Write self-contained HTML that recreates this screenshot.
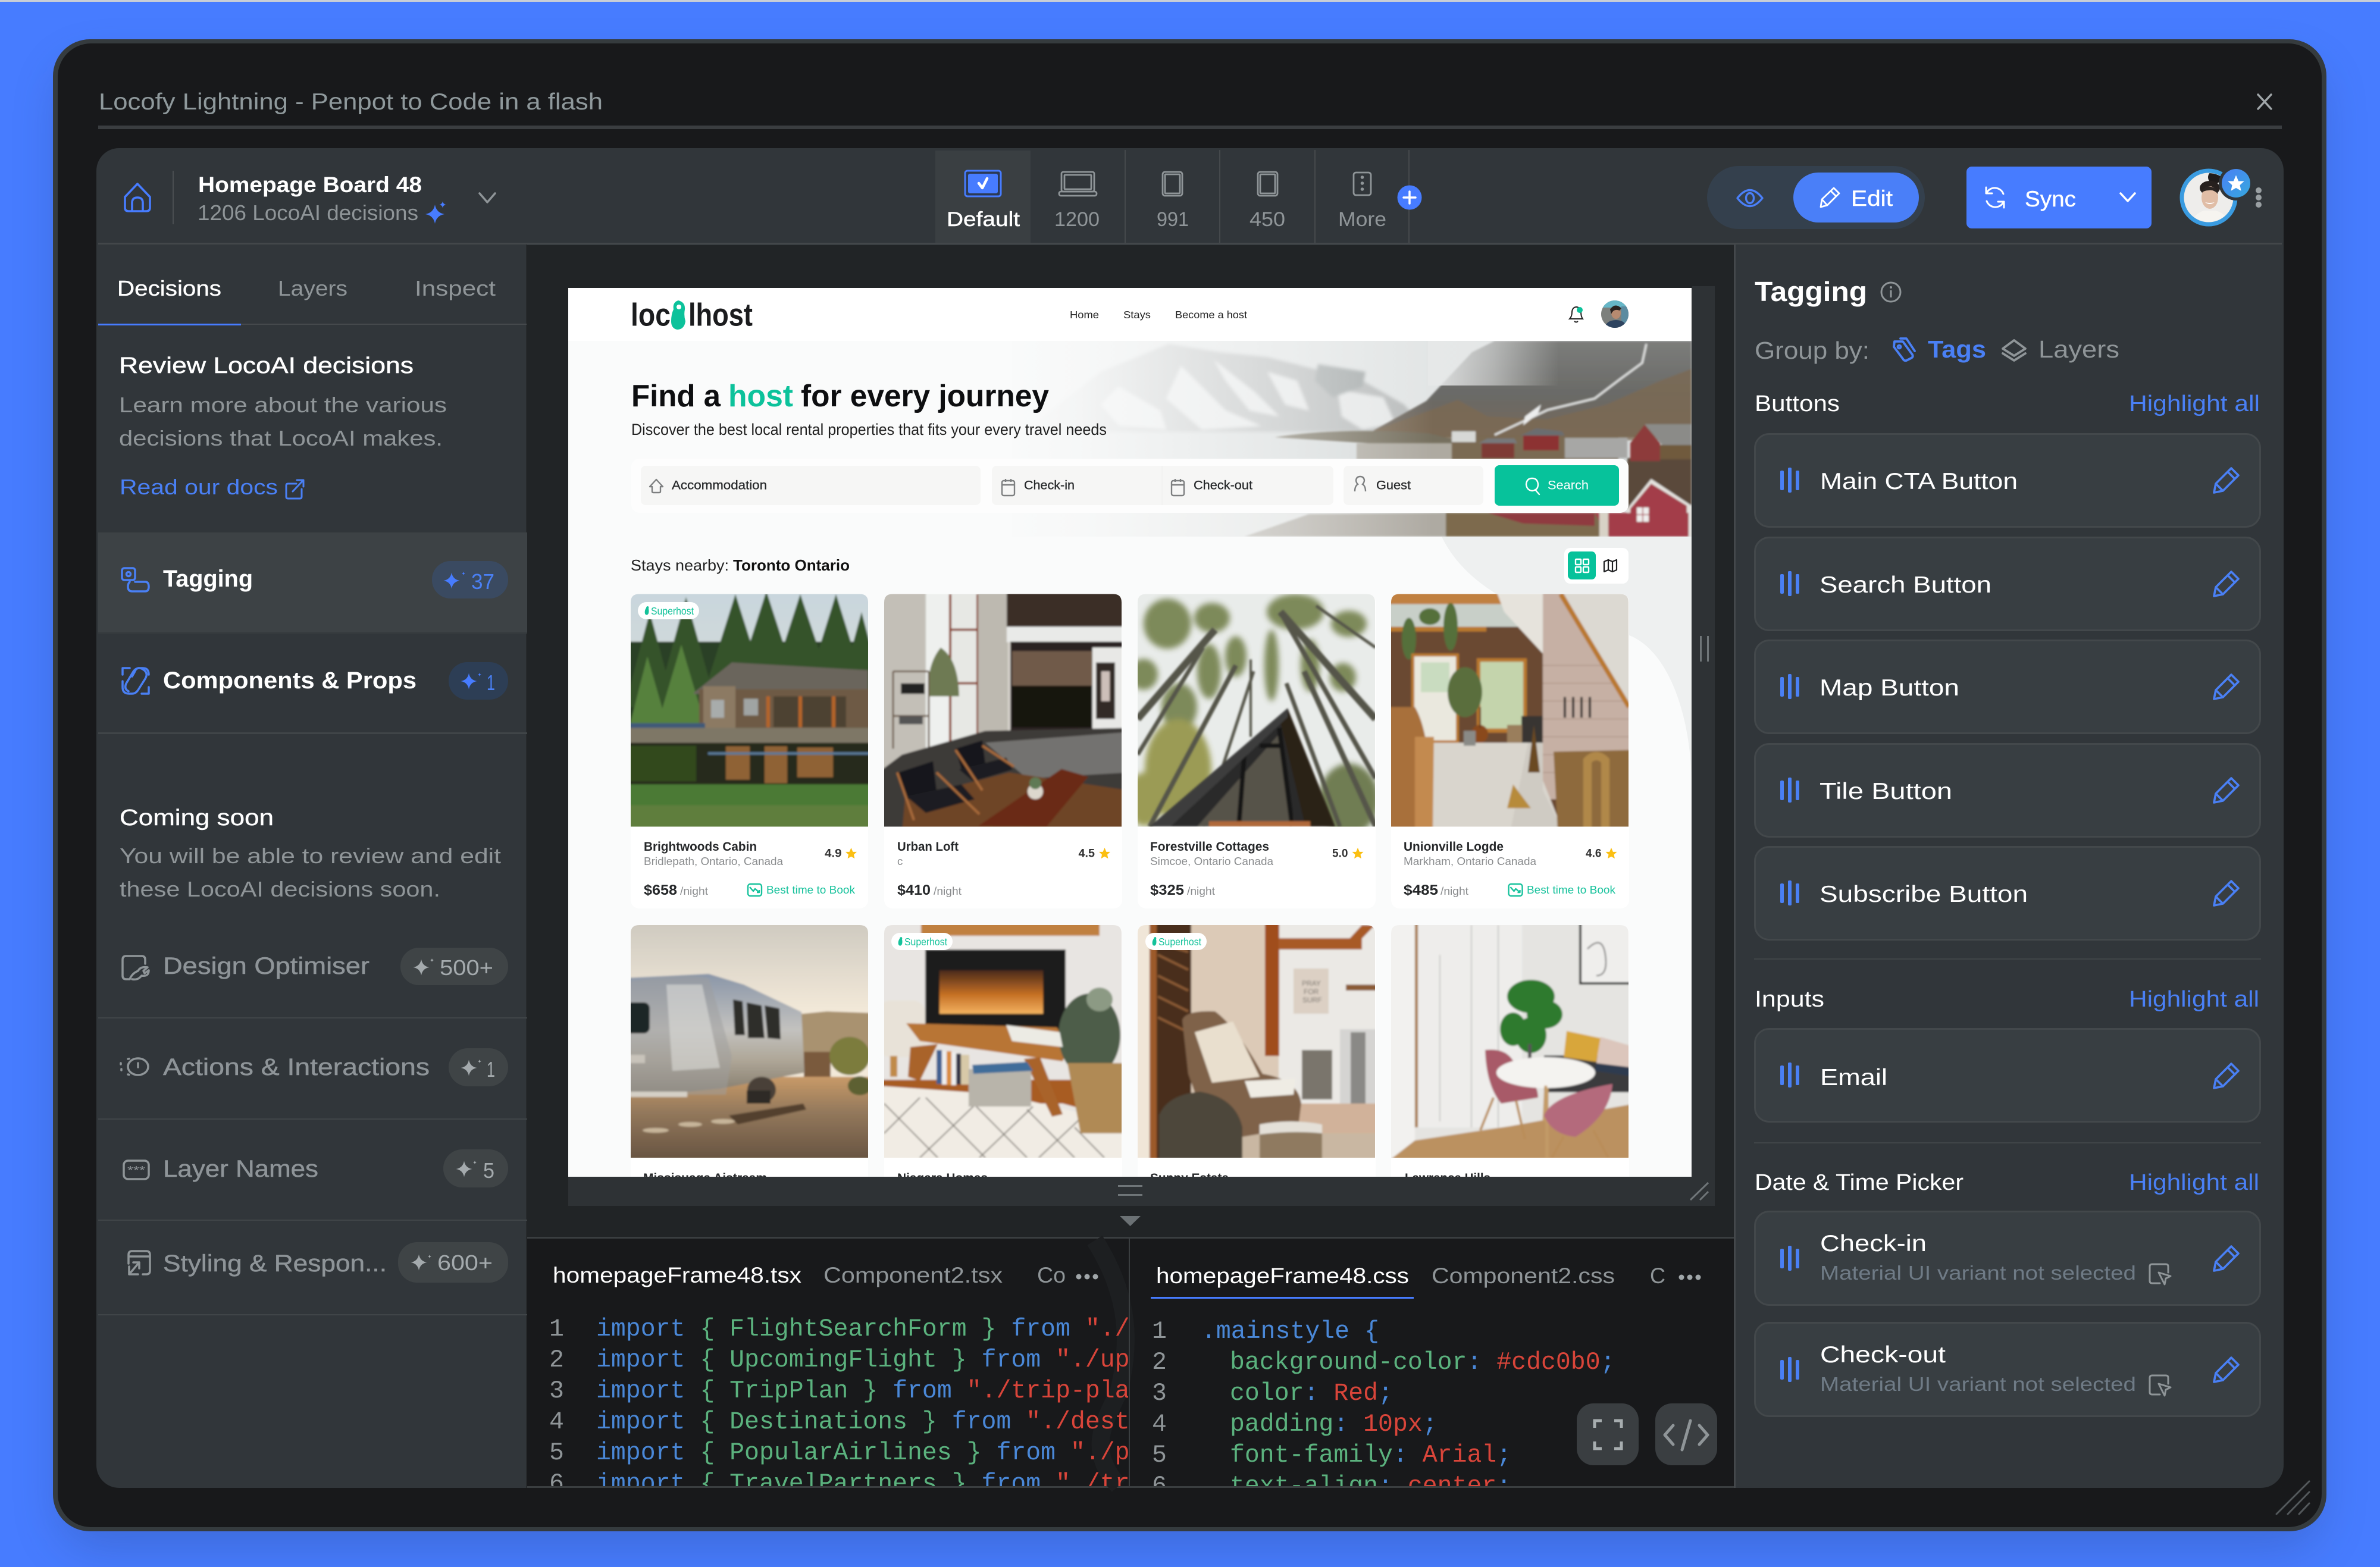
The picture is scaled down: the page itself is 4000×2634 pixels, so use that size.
<!DOCTYPE html>
<html lang="en"><head><meta charset="utf-8"><title>Locofy Lightning</title>
<style>
html,body{margin:0;padding:0;background:#477cff}
svg{display:block}
text{font-family:"Liberation Sans",sans-serif;white-space:pre}
.m{font-family:"Liberation Mono",monospace;font-size:41.5px}
.w{fill:#fff}.g{fill:#8f9598}.b{fill:#4a80f5}.sb{font-weight:700}
.k{fill:#4a88d8}.e{fill:#5bb27e}.r{fill:#d9453a}.n{fill:#8f9598}
.li{stroke:#8f9598;stroke-width:3.5;fill:none;stroke-linecap:round;stroke-linejoin:round}
.bl{stroke:#4a80f5;stroke-width:3.5;fill:none;stroke-linecap:round;stroke-linejoin:round}
.ct{font-size:21.5px;font-weight:700;fill:#26282a}
.cs{font-size:18.5px;fill:#8a8c8e}
.cr{font-size:19px;fill:#333;font-weight:700}
.cp{font-size:24px;font-weight:700;fill:#26282a}
.cn{font-size:18.5px;fill:#8a8c8e}
.cb{font-size:18.5px;fill:#17c29c}
.sh{font-size:17.5px;fill:#12c29a}
</style></head><body>
<svg xmlns="http://www.w3.org/2000/svg" width="4000" height="2634" viewBox="0 0 4000 2634">
<defs>
<path id="st" d="M0-10Q1.5-1.5 10 0Q1.5 1.5 0 10Q-1.5 1.5-10 0Q-1.5-1.5 0-10Z"/>
<path id="fs" d="M0-10L2.9-3.1 9.5-3.1 4.5 1.5 5.9 8.1 0 4.7-5.9 8.1-4.5 1.5-9.5-3.1-2.9-3.1Z"/>
<g id="pen" fill="none" stroke="#4a80f5" stroke-width="3.6" stroke-linejoin="round"><path d="M1 43L4 28 30 2 42 14 16 40Z"/><path d="M24 8L36 20M4 28L16 40"/></g>
<g id="bars" fill="#4a80f5"><rect x="0" y="-16" width="6" height="33" rx="2"/><rect x="13" y="-21" width="6" height="42" rx="2"/><rect x="26" y="-16" width="6" height="33" rx="2"/></g>
<g id="cur" fill="none" stroke="#8f9598" stroke-width="3" stroke-linejoin="round" stroke-linecap="round"><path d="M18 33H5Q1 33 1 29V5Q1 1 5 1H28Q32 1 32 5V15"/><path d="M16 15L36 21 28 25 26 35Z"/></g>
<g id="ci" fill="none" stroke="#7d7f80" stroke-width="2.4"><rect x="0" y="3" width="21" height="25" rx="3"/><path d="M0 10H21M6 0V5M15 0V5"/></g>
<g id="sp"><path fill="#14c29a" d="M4 3Q4 0 7 0Q9 1 8 4Q9 8 8 12Q6 16 3 14Q1 12 2 7Q3 4 4 3Z"/></g>
<g id="bt" fill="none" stroke="#17c29c" stroke-width="2.4" stroke-linejoin="round"><rect x="1" y="1" width="23" height="20" rx="4"/><path d="M4 6L10 13 13 9 20 15M16 15H20V11"/></g>
<clipPath id="pg"><rect x="955" y="484" width="1888" height="1494"/></clipPath>
<clipPath id="c1"><rect x="886" y="2082" width="1010" height="416"/></clipPath>
<clipPath id="c2"><rect x="1900" y="2082" width="1012" height="416"/></clipPath>
<clipPath id="hero"><rect x="1700" y="573" width="1143" height="329"/></clipPath>
<clipPath id="ava"><circle cx="3712" cy="332" r="41"/></clipPath>
<clipPath id="ava2"><circle cx="2714" cy="528" r="23"/></clipPath>
<clipPath id="imgr"><path d="M0 391V14Q0 0 14 0H385Q399 0 399 14V391Z"/></clipPath>
<linearGradient id="sky1" x1="0" y1="0" x2="0" y2="1"><stop offset="0" stop-color="#c8d6de"/><stop offset="1" stop-color="#e8e2cc"/></linearGradient>
<linearGradient id="sky5" x1="0" y1="0" x2="0" y2="1"><stop offset="0" stop-color="#cdc9bf"/><stop offset=".38" stop-color="#f3e9d9"/><stop offset="1" stop-color="#f3e9d9"/></linearGradient>
<linearGradient id="gr5" x1="0" y1="0" x2="0" y2="1"><stop offset="0" stop-color="#c89a68"/><stop offset=".4" stop-color="#94795c"/><stop offset="1" stop-color="#63503f"/></linearGradient>
<linearGradient id="tr5" x1="0" y1="0" x2="0" y2="1"><stop offset="0" stop-color="#8a96a8"/><stop offset=".45" stop-color="#c3c2bf"/><stop offset=".7" stop-color="#aea697"/><stop offset="1" stop-color="#7f7667"/></linearGradient>
<linearGradient id="fire" x1="0" y1="0" x2="0" y2="1"><stop offset="0" stop-color="#4a2a1c"/><stop offset=".55" stop-color="#c46f24"/><stop offset="1" stop-color="#f3b260"/></linearGradient>
<linearGradient id="mt" x1="0" y1="0" x2="0" y2="1"><stop offset="0" stop-color="#7c7d7b"/><stop offset=".55" stop-color="#6a6a67"/><stop offset="1" stop-color="#75685a"/></linearGradient>
<linearGradient id="fade" x1="0" y1="0" x2="1" y2="0"><stop offset="0" stop-color="#f9fafa"/><stop offset=".1" stop-color="#f9fafa" stop-opacity=".92"/><stop offset=".42" stop-color="#f9fafa" stop-opacity=".4"/><stop offset=".62" stop-color="#f9fafa" stop-opacity="0"/></linearGradient>
<linearGradient id="fog" x1="0" y1="0" x2="1" y2="0"><stop offset="0" stop-color="#e6e8e8" stop-opacity=".95"/><stop offset=".5" stop-color="#e6e8e8" stop-opacity=".55"/><stop offset="1" stop-color="#e6e8e8" stop-opacity="0"/></linearGradient>
<linearGradient id="bad" x1="0" y1="0" x2="1" y2="1"><stop offset="0" stop-color="#4a80f5"/><stop offset="1" stop-color="#36a8de"/></linearGradient>
<filter id="blur" x="-10%" y="-10%" width="120%" height="120%"><feGaussianBlur stdDeviation="40"/></filter>
<filter id="ph" x="-5%" y="-5%" width="110%" height="110%"><feGaussianBlur stdDeviation="1.6"/></filter>
<filter id="ph2" x="-20%" y="-20%" width="140%" height="140%"><feGaussianBlur stdDeviation="5"/></filter>
<filter id="ph3" x="-10%" y="-10%" width="120%" height="120%"><feGaussianBlur stdDeviation="3"/></filter>
</defs>

<!-- background -->
<rect width="4000" height="2634" fill="#477cff"/>
<rect width="4000" height="3" fill="#c9ced6"/>
<rect x="100" y="110" width="3800" height="2490" rx="60" fill="#27407f" opacity=".3" filter="url(#blur)"/>

<!-- window -->
<rect x="89" y="66" width="3821" height="2508" rx="62" fill="#353b3e"/>
<rect x="97" y="73" width="3805" height="2494" rx="56" fill="#18191b"/>
<text x="166" y="184" font-size="39" fill="#8f999c" textLength="847" lengthAdjust="spacingAndGlyphs">Locofy Lightning - Penpot to Code in a flash</text>
<rect x="165" y="211" width="3670" height="6" fill="#3a3d40"/>
<path d="M3795 159L3817 183M3817 159L3795 183" stroke="#a0a6a9" stroke-width="3.5" stroke-linecap="round"/>
<g stroke="#53585b" stroke-width="3" stroke-linecap="round"><path d="M3826 2545L3881 2490M3845 2545L3881 2508M3864 2545L3881 2527"/></g>

<!-- app panel -->
<rect x="162" y="249" width="3676" height="2252" rx="38" fill="#31363a"/>
<rect x="886" y="412" width="2028" height="1668" fill="#212426"/>
<rect x="886" y="2082" width="2028" height="416" fill="#18191b"/>
<rect x="165" y="408" width="3670" height="3" fill="#43474a"/>
<rect x="886" y="2079" width="2028" height="3" fill="#3a3e40"/>
<rect x="886" y="2498" width="2028" height="3" fill="#3a3e40"/>
<rect x="2914" y="411" width="3" height="2090" fill="#44484b"/>
<rect x="884" y="411" width="2" height="2090" fill="#26292b"/>

<!-- header left -->
<path d="M210 331L231 309 252 331V349Q252 355 246 355H216Q210 355 210 349Z M222 355V341Q222 332 231 332 240 332 240 341V355" fill="none" stroke="#477cff" stroke-width="3.6" stroke-linejoin="round"/>
<rect x="290" y="287" width="2" height="90" fill="#4a4e51"/>
<text x="333" y="323" font-size="37" class="w sb" textLength="376" lengthAdjust="spacingAndGlyphs">Homepage Board 48</text>
<text x="332" y="370" font-size="36" class="g" textLength="371" lengthAdjust="spacingAndGlyphs">1206 LocoAI decisions</text>
<use href="#st" transform="translate(731 360) scale(1.6)" fill="#477cff"/>
<use href="#st" transform="translate(744 344) scale(.55)" fill="#477cff"/>
<path d="M806 325L819 340 832 325" fill="none" stroke="#8f9598" stroke-width="3.5" stroke-linecap="round" stroke-linejoin="round"/>

<!-- toolbar devices -->
<rect x="1572" y="253" width="160" height="155" fill="#3a3f42"/>
<rect x="1890" y="252" width="2" height="156" fill="#45494c"/><rect x="2049" y="252" width="2" height="156" fill="#45494c"/><rect x="2209" y="252" width="2" height="156" fill="#45494c"/><rect x="2367" y="252" width="2" height="156" fill="#45494c"/>
<rect x="1622" y="287" width="60" height="43" rx="4" fill="#2b3a55" stroke="#477cff" stroke-width="3"/>
<rect x="1627" y="292" width="50" height="33" rx="3" fill="#477cff"/>
<path d="M1645 308L1651 316 1659 300" fill="none" stroke="#fff" stroke-width="4.5" stroke-linecap="round" stroke-linejoin="round"/>
<text x="1591" y="380" font-size="34" class="w" stroke="#fff" stroke-width=".5" textLength="123" lengthAdjust="spacingAndGlyphs">Default</text>
<g class="li" style="stroke-width:2.8"><rect x="1784" y="289" width="55" height="33" rx="3"/><rect x="1789" y="294" width="45" height="24" rx="1"/><rect x="1780" y="322" width="63" height="7" rx="3"/>
<rect x="1954" y="289" width="33" height="40" rx="4"/><rect x="1958" y="293" width="25" height="32" rx="1"/>
<rect x="2114" y="289" width="33" height="40" rx="4"/><rect x="2118" y="293" width="25" height="32" rx="1"/>
<rect x="2275" y="290" width="29" height="38" rx="4"/></g>
<g fill="#8f9598"><circle cx="2289.5" cy="298" r="2.8"/><circle cx="2289.5" cy="308" r="2.8"/><circle cx="2289.5" cy="318" r="2.8"/></g>
<text x="1772" y="380" font-size="34" class="g" textLength="76" lengthAdjust="spacingAndGlyphs">1200</text>
<text x="1944" y="380" font-size="34" class="g" textLength="54" lengthAdjust="spacingAndGlyphs">991</text>
<text x="2100" y="380" font-size="34" class="g" textLength="60" lengthAdjust="spacingAndGlyphs">450</text>
<text x="2249" y="380" font-size="34" class="g" textLength="81" lengthAdjust="spacingAndGlyphs">More</text>
<circle cx="2369" cy="332" r="20.5" fill="#477cff"/>
<path d="M2369 322V342M2359 332H2379" stroke="#fff" stroke-width="3.5" stroke-linecap="round"/>

<!-- toolbar right -->
<rect x="2869" y="279" width="366" height="106" rx="53" fill="#34404d"/>
<path d="M2920 333Q2941 306 2962 333Q2941 360 2920 333Z" fill="none" stroke="#4a7ff8" stroke-width="3.4" stroke-linejoin="round"/><ellipse cx="2941" cy="333" rx="6.5" ry="8.5" fill="none" stroke="#4a7ff8" stroke-width="3.4"/>
<rect x="3014" y="290" width="211" height="84" rx="42" fill="#4a7ff8"/>
<g fill="none" stroke="#fff" stroke-width="2.8" stroke-linejoin="round"><path d="M3060 348L3062 335 3082 316 3091 325 3071 345Z M3062 335L3071 345 M3077 321L3086 330"/></g>
<text x="3111" y="346" font-size="37" class="w" stroke="#fff" stroke-width=".4" textLength="70" lengthAdjust="spacingAndGlyphs">Edit</text>
<rect x="3305" y="280" width="311" height="104" rx="9" fill="#477cff"/>
<g fill="none" stroke="#fff" stroke-width="3" stroke-linecap="round" stroke-linejoin="round"><path d="M3367 326A15.5 15.5 0 0 0 3342 320L3338 325M3338 315V325H3348"/><path d="M3339 338A15.5 15.5 0 0 0 3364 344L3368 339M3368 349V339H3358"/></g>
<text x="3403" y="347" font-size="37" class="w" stroke="#fff" stroke-width=".4" textLength="86" lengthAdjust="spacingAndGlyphs">Sync</text>
<path d="M3564 325L3576 338 3588 325" fill="none" stroke="#fff" stroke-width="3.5" stroke-linecap="round" stroke-linejoin="round"/>
<circle cx="3712" cy="332" r="45" fill="#e8e8e6" stroke="#3a9be0" stroke-width="7"/>
<g clip-path="url(#ava)"><rect x="3665" y="285" width="95" height="95" fill="#eeedeb"/><circle cx="3722" cy="298" r="11" fill="#1f1b1a"/><ellipse cx="3714" cy="316" rx="17" ry="12" fill="#26201e"/><ellipse cx="3714" cy="332" rx="14" ry="19" fill="#e0bda6"/><path d="M3700 324Q3706 310 3716 314Q3727 316 3728 326Q3720 318 3712 320Q3705 320 3700 324Z" fill="#2a2422"/><path d="M3706 340Q3714 346 3722 340Q3714 342 3706 340Z" fill="#fff"/><path d="M3680 380Q3686 360 3704 354H3724Q3744 360 3748 380Z" fill="#f6f4f0"/></g>
<circle cx="3758" cy="308" r="29" fill="#31363a"/><circle cx="3758" cy="308" r="24" fill="url(#bad)"/>
<use href="#fs" transform="translate(3758 309) scale(1.45)" fill="#fff"/>
<g fill="#9aa0a3"><circle cx="3796" cy="320" r="5"/><circle cx="3796" cy="332" r="5"/><circle cx="3796" cy="344" r="5"/></g>

<!-- left sidebar -->
<text x="197" y="497" font-size="36" class="w" stroke="#fff" stroke-width=".4" textLength="175" lengthAdjust="spacingAndGlyphs">Decisions</text>
<text x="467" y="497" font-size="36" class="g" textLength="117" lengthAdjust="spacingAndGlyphs">Layers</text>
<text x="697" y="497" font-size="36" class="g" textLength="136" lengthAdjust="spacingAndGlyphs">Inspect</text>
<rect x="165" y="544" width="720" height="2" fill="#45494c"/><rect x="165" y="544" width="240" height="3" fill="#477cff"/>
<text x="200" y="627" font-size="38" class="w" stroke="#fff" stroke-width=".5" textLength="495" lengthAdjust="spacingAndGlyphs">Review LocoAI decisions</text>
<text x="200" y="693" font-size="36" class="g" textLength="551" lengthAdjust="spacingAndGlyphs">Learn more about the various</text>
<text x="200" y="749" font-size="36" class="g" textLength="544" lengthAdjust="spacingAndGlyphs">decisions that LocoAI makes.</text>
<text x="201" y="831" font-size="36" fill="#4a80f5" textLength="266" lengthAdjust="spacingAndGlyphs">Read our docs</text>
<path d="M498 813H484Q481 813 481 816V835Q481 838 484 838H504Q507 838 507 835V822M492 826L509 808M499 807H510V818" class="bl" style="stroke-width:3"/>

<rect x="165" y="895" width="721" height="167" fill="#3d4245"/>
<rect x="165" y="1062" width="721" height="3" fill="#373c3f"/>
<g class="bl"><rect x="205" y="955" width="22" height="20" rx="4"/><circle cx="216" cy="965" r="3.5"/><path d="M227 978H244Q250 978 250 986Q250 994 244 994H222Q215 994 215 986Q215 981 218 978"/></g>
<text x="274" y="986" font-size="40" class="w sb" textLength="151" lengthAdjust="spacingAndGlyphs">Tagging</text>
<rect x="726" y="943" width="128" height="63" rx="31" fill="#3a4a61"/>
<use href="#st" transform="translate(759 976) scale(1.35)" fill="#477cff"/><use href="#st" transform="translate(779 964) scale(.3)" fill="#477cff"/>
<text x="792" y="990" font-size="36" fill="#4a80f5" textLength="39" lengthAdjust="spacingAndGlyphs">37</text>

<g class="bl"><path d="M206 1134V1123H218M250 1155V1166H238M206 1145V1155Q206 1166 217 1166H222Q228 1166 232 1160L244 1141Q250 1131 240 1125T226 1130L222 1137M250 1134Q250 1123 240 1123H234Q228 1123 224 1129L212 1149Q208 1158 216 1162"/></g>
<text x="274" y="1157" font-size="40" class="w sb" textLength="426" lengthAdjust="spacingAndGlyphs">Components &amp; Props</text>
<rect x="754" y="1113" width="100" height="63" rx="31" fill="#2d3e55"/>
<use href="#st" transform="translate(788 1145) scale(1.35)" fill="#477cff"/><use href="#st" transform="translate(806 1134) scale(.3)" fill="#477cff"/>
<text x="818" y="1160" font-size="36" fill="#4a80f5" textLength="14" lengthAdjust="spacingAndGlyphs">1</text>
<rect x="165" y="1231" width="721" height="3" fill="#404548"/>

<text x="201" y="1387" font-size="38" class="w" stroke="#fff" stroke-width=".4" textLength="259" lengthAdjust="spacingAndGlyphs">Coming soon</text>
<text x="201" y="1451" font-size="36" class="g" textLength="641" lengthAdjust="spacingAndGlyphs">You will be able to review and edit</text>
<text x="201" y="1507" font-size="36" class="g" textLength="539" lengthAdjust="spacingAndGlyphs">these LocoAI decisions soon.</text>

<g class="li"><path d="M218 1646H212Q206 1646 206 1640V1613Q206 1607 212 1607H238Q244 1607 244 1613V1620M218 1646Q222 1636 232 1632Q236 1624 248 1626L241 1632 243 1636 250 1631Q250 1642 238 1640Q232 1648 222 1646"/></g>
<text x="274" y="1637" font-size="40" fill="#8e9498" stroke="#8e9498" stroke-width=".5" textLength="347" lengthAdjust="spacingAndGlyphs">Design Optimiser</text>
<rect x="673" y="1593" width="181" height="63" rx="31" fill="#3f4446"/>
<use href="#st" transform="translate(708 1626) scale(1.35)" fill="#a4aaad"/><use href="#st" transform="translate(726 1614) scale(.3)" fill="#a4aaad"/>
<text x="739" y="1639" font-size="36" fill="#a4aaad" textLength="90" lengthAdjust="spacingAndGlyphs">500+</text>
<rect x="165" y="1710" width="721" height="2" fill="#404548"/>

<g class="li"><ellipse cx="232" cy="1793" rx="17" ry="14"/><path d="M232 1787V1794"/><path d="M203 1787V1789M204 1797V1799M215 1780L219 1779M215 1806L219 1807" stroke-dasharray="2 5"/></g>
<text x="274" y="1807" font-size="40" fill="#8e9498" stroke="#8e9498" stroke-width=".5" textLength="448" lengthAdjust="spacingAndGlyphs">Actions &amp; Interactions</text>
<rect x="754" y="1762" width="100" height="64" rx="32" fill="#3f4446"/>
<use href="#st" transform="translate(788 1795) scale(1.35)" fill="#a4aaad"/><use href="#st" transform="translate(806 1784) scale(.3)" fill="#a4aaad"/>
<text x="818" y="1810" font-size="36" fill="#a4aaad" textLength="14" lengthAdjust="spacingAndGlyphs">1</text>
<rect x="165" y="1880" width="721" height="2" fill="#404548"/>

<rect x="208" y="1951" width="42" height="31" rx="7" class="li"/>
<text x="214" y="1974" font-size="20" fill="#8f9598" textLength="30" lengthAdjust="spacingAndGlyphs">***</text>
<text x="274" y="1978" font-size="40" fill="#8e9498" stroke="#8e9498" stroke-width=".5" textLength="261" lengthAdjust="spacingAndGlyphs">Layer Names</text>
<rect x="745" y="1932" width="109" height="64" rx="32" fill="#3f4446"/>
<use href="#st" transform="translate(780 1965) scale(1.35)" fill="#a4aaad"/><use href="#st" transform="translate(798 1954) scale(.3)" fill="#a4aaad"/>
<text x="812" y="1980" font-size="36" fill="#a4aaad" textLength="19" lengthAdjust="spacingAndGlyphs">5</text>
<rect x="165" y="2050" width="721" height="2" fill="#404548"/>

<g class="li"><path d="M216 2124V2109Q216 2103 222 2103H246Q252 2103 252 2109V2136Q252 2142 246 2142H240M216 2112H252M217 2142H232M217 2142V2129M217 2142L234 2122M224 2122H234V2132"/></g>
<text x="274" y="2137" font-size="40" fill="#8e9498" stroke="#8e9498" stroke-width=".5" textLength="376" lengthAdjust="spacingAndGlyphs">Styling &amp; Respon...</text>
<rect x="669" y="2088" width="185" height="68" rx="32" fill="#3f4446"/>
<use href="#st" transform="translate(704 2122) scale(1.35)" fill="#a4aaad"/><use href="#st" transform="translate(722 2112) scale(.3)" fill="#a4aaad"/>
<text x="735" y="2135" font-size="36" fill="#a4aaad" textLength="93" lengthAdjust="spacingAndGlyphs">600+</text>
<rect x="165" y="2209" width="721" height="2" fill="#404548"/>

<!-- canvas frame -->
<path d="M955 1978H2844V481H2882V2027H955Z" fill="#2e3235"/>
<rect x="2857" y="1069" width="3" height="43" fill="#6f7578"/><rect x="2869" y="1069" width="3" height="43" fill="#6f7578"/>
<rect x="1879" y="1992" width="41" height="3" fill="#6f7578"/><rect x="1879" y="2007" width="41" height="3" fill="#6f7578"/>
<path d="M2841 2017L2871 1988M2857 2017L2871 2003" stroke="#6f7578" stroke-width="3"/>
<path d="M1882 2044H1917L1899.5 2061Z" fill="#6b7174"/>

<!-- website -->
<g clip-path="url(#pg)">
<rect x="955" y="484" width="1888" height="1494" fill="#fafbfb"/>
<path d="M2423 902C2470 1000 2600 1050 2720 1063C2800 1075 2843 1200 2843 1320V902Z" fill="#eef0f0"/>
<!-- hero -->
<g clip-path="url(#hero)">
<rect x="1700" y="573" width="1143" height="329" fill="#e2e5e5"/>
<g filter="url(#ph3)">
<path d="M1720 726L1850 625 1964 578 2050 592 2130 600 2200 618 2290 640 2360 680 2400 726Z" fill="#b9bcbc"/>
<path d="M1985 615L2060 690 2120 716 2020 722 1960 670ZM2040 605L2110 660 2150 700 2100 690 2060 640ZM2248 655L2325 668 2345 712 2290 722 2255 700ZM1880 650L1950 690 1960 722 1880 715 1850 680ZM2130 625L2180 640 2200 690 2160 680Z" fill="#e6e8e8"/>
<path d="M2215 612L2295 625 2290 650 2240 668 2210 640Z" fill="#a6abab"/>
<rect x="1700" y="726" width="1143" height="50" fill="#d7dbdb"/>
</g>
<g filter="url(#ph)">
<path d="M2308 724L2397 674 2474 592 2512 573H2843V735H2308Z" fill="url(#mt)"/>
<path d="M2308 724L2390 695 2450 672 2500 700 2600 705 2700 680 2790 640 2843 620V740H2308Z" fill="#7c6a52" opacity=".75"/>
<path d="M2767 578L2760 610 2722 638 2680 670 2601 689 2512 731" fill="none" stroke="#dfe0df" stroke-width="3.5"/>
<path d="M2563 700L2590 680 2585 695 2560 715Z" fill="#eceded"/>
<path d="M2142 735Q2250 718 2400 728L2470 745 2300 745Z" fill="#76705f"/>
<rect x="2280" y="745" width="350" height="30" fill="#9c9588" opacity=".7"/>
<rect x="2440" y="735" width="280" height="40" fill="#7a6a52"/>
<rect x="2560" y="732" width="60" height="25" fill="#8c3030"/><path d="M2555 732L2582 720 2625 725 2630 732Z" fill="#6b6d70"/>
<rect x="2490" y="745" width="55" height="25" fill="#7e3a34"/><path d="M2485 745L2500 737H2545L2550 745Z" fill="#77787a"/>
<path d="M2630 736H2735V770H2630Z" fill="#a7a7a5"/>
<rect x="2440" y="725" width="40" height="18" fill="#d7d8d6"/>
<rect x="2735" y="770" width="108" height="90" fill="#5a4a3a"/>
<path d="M2740 745L2764 714 2790 745 2790 775H2740Z" fill="#8d3b3b"/><path d="M2764 713H2843V748L2795 750Z" fill="#8b8b88"/><rect x="2790" y="748" width="53" height="24" fill="#6f5a3c"/>
<path d="M2735 855L2775 805 2843 850V862H2735Z" fill="#e4e2de"/><path d="M2740 855L2775 813 2835 850 2835 902H2740Z" fill="#a33d48"/>
<path d="M1700 862H2843V902H1700Z" fill="#e2e4e3"/>
<path d="M2091 902L2200 864 2430 862 2430 902Z" fill="#aeaaa2"/>
<rect x="2430" y="862" width="413" height="40" fill="#7d6a4e"/>
<path d="M2500 862H2680V884L2560 880Z" fill="#8f3b40"/>
<path d="M2680 862H2838V902H2703Z" fill="#a33d48"/><rect x="2688" y="862" width="15" height="40" fill="#d8d2c6"/>
<rect x="2751" y="853" width="20" height="24" fill="#f0f0ee"/><path d="M2761 853V877M2751 865H2771" stroke="#a33d48" stroke-width="1.5"/>
<rect x="2838" y="850" width="5" height="52" fill="#e4e2de"/>
</g>
<rect x="2400" y="573" width="220" height="75" fill="url(#fog)"/>
<rect x="1700" y="573" width="1143" height="329" fill="url(#fade)"/>
</g>
<rect x="955" y="484" width="1888" height="89" fill="#fff"/>
<!-- nav -->
<text x="1060" y="547.5" font-size="54" fill="#1b1c1e" class="sb" textLength="67" lengthAdjust="spacingAndGlyphs">loc</text>
<path d="M1140 505Q1152 508 1151 520Q1149 530 1152 540Q1150 554 1138 554Q1128 552 1128 540Q1128 528 1132 520Q1130 508 1140 505Z" fill="#0cc29b"/><circle cx="1141" cy="516" r="4" fill="#fff"/>
<text x="1157" y="547.5" font-size="54" fill="#1b1c1e" class="sb" textLength="108" lengthAdjust="spacingAndGlyphs">lhost</text>
<text x="1798" y="535" font-size="17.5" fill="#222" textLength="49" lengthAdjust="spacingAndGlyphs">Home</text>
<text x="1888" y="535" font-size="17.5" fill="#222" textLength="46" lengthAdjust="spacingAndGlyphs">Stays</text>
<text x="1975" y="535" font-size="17.5" fill="#222" textLength="121" lengthAdjust="spacingAndGlyphs">Become a host</text>
<path d="M2638 536Q2642 532 2642 524Q2643 516 2650 516Q2656 517 2657 524Q2657 532 2660 536ZM2646 540Q2649 543 2652 540" fill="none" stroke="#222" stroke-width="2"/><circle cx="2655" cy="521" r="5" fill="#0cc29b"/>
<circle cx="2714" cy="528" r="23" fill="#7c7f7c"/>
<g clip-path="url(#ava2)"><rect x="2691" y="505" width="46" height="12" fill="#66b6c7"/><rect x="2725" y="515" width="12" height="30" fill="#5b8ba0"/><ellipse cx="2716" cy="526" rx="8" ry="10" fill="#b78a70"/><path d="M2706 520Q2714 508 2725 518L2722 522Q2712 518 2708 528Z" fill="#2a2220"/><path d="M2696 552Q2700 538 2716 538Q2732 538 2734 552Z" fill="#2e4460"/></g>
<!-- h1 -->
<text x="1061" y="683" font-size="52" fill="#0d0e10" class="sb" textLength="150" lengthAdjust="spacingAndGlyphs">Find a</text>
<text x="1224" y="683" font-size="52" fill="#0cc29b" class="sb" textLength="109" lengthAdjust="spacingAndGlyphs">host</text>
<text x="1346" y="683" font-size="52" fill="#0d0e10" class="sb" textLength="417" lengthAdjust="spacingAndGlyphs">for every journey</text>
<text x="1061" y="731" font-size="27" fill="#222" textLength="799" lengthAdjust="spacingAndGlyphs">Discover the best local rental properties that fits your every travel needs</text>
<!-- search -->
<rect x="1061" y="771" width="1676" height="91" rx="14" fill="#fdfdfd"/>
<rect x="1077" y="783" width="571" height="66" rx="8" fill="#f6f6f5"/>
<rect x="1667" y="783" width="574" height="66" rx="8" fill="#f6f6f5"/>
<rect x="1952" y="783" width="2" height="66" fill="#f2f2f1"/>
<rect x="2258" y="783" width="235" height="66" rx="8" fill="#f6f6f5"/>
<path d="M1103 806L1092 818H1096V826Q1096 828 1098 828H1108Q1110 828 1110 826V818H1114Z" fill="none" stroke="#7d7f80" stroke-width="2.4" stroke-linejoin="round"/>
<text x="1129" y="822.5" font-size="21" fill="#26282a" stroke="#26282a" stroke-width=".3" textLength="160" lengthAdjust="spacingAndGlyphs">Accommodation</text>
<use href="#ci" transform="translate(1684 805)"/>
<text x="1721" y="822.5" font-size="21" fill="#26282a" stroke="#26282a" stroke-width=".3" textLength="85" lengthAdjust="spacingAndGlyphs">Check-in</text>
<use href="#ci" transform="translate(1969 805)"/>
<text x="2006" y="822.5" font-size="21" fill="#26282a" stroke="#26282a" stroke-width=".3" textLength="99" lengthAdjust="spacingAndGlyphs">Check-out</text>
<path d="M2277 826Q2277 817 2282 814Q2279 811 2279 807Q2280 801 2286 801Q2292 801 2293 807Q2293 811 2290 814Q2295 817 2295 826" fill="none" stroke="#7d7f80" stroke-width="2.4"/>
<text x="2313" y="822.5" font-size="21" fill="#26282a" stroke="#26282a" stroke-width=".3" textLength="58" lengthAdjust="spacingAndGlyphs">Guest</text>
<rect x="2512" y="782" width="209" height="68" rx="8" fill="#07c29b"/>
<path d="M2575 804Q2584 804 2585 814Q2585 824 2575 825Q2566 824 2565 814Q2566 804 2575 804ZM2580 823L2587 831" fill="none" stroke="#fff" stroke-width="2.4" stroke-linecap="round"/>
<text x="2601" y="822.5" font-size="21" fill="#fff" textLength="69" lengthAdjust="spacingAndGlyphs">Search</text>
<text x="1060" y="959" font-size="26" fill="#222" textLength="165" lengthAdjust="spacingAndGlyphs">Stays nearby:</text>
<text x="1232" y="959" font-size="26" fill="#111" class="sb" textLength="196" lengthAdjust="spacingAndGlyphs">Toronto Ontario</text>
<rect x="2629" y="921" width="108" height="60" rx="10" fill="#fff"/><rect x="2635" y="927" width="47" height="47" rx="7" fill="#07c29b"/>
<g fill="none" stroke="#fff" stroke-width="2.4"><rect x="2648" y="940" width="9" height="9" rx="1"/><rect x="2661" y="940" width="9" height="9" rx="1"/><rect x="2648" y="953" width="9" height="9" rx="1"/><rect x="2661" y="953" width="9" height="9" rx="1"/></g>
<path d="M2696 944L2703 941 2710 944 2717 941V958L2710 961 2703 958 2696 961ZM2703 941V958M2710 944V961" fill="none" stroke="#1d1e20" stroke-width="2.2" stroke-linejoin="round"/>

<!-- card backgrounds -->
<g fill="#fff"><rect x="1060" y="998" width="399" height="529" rx="14"/><rect x="1486" y="998" width="400" height="529" rx="14"/><rect x="1912" y="998" width="400" height="529" rx="14"/><rect x="2338" y="998" width="400" height="529" rx="14"/><rect x="1060" y="1555" width="399" height="460" rx="14"/><rect x="1486" y="1555" width="400" height="460" rx="14"/><rect x="1912" y="1555" width="400" height="460" rx="14"/><rect x="2338" y="1555" width="400" height="460" rx="14"/></g>

<!-- photo 1: cabin -->
<g transform="translate(1060 998.5)"><g clip-path="url(#imgr)"><g filter="url(#ph)">
<rect x="-10" y="-10" width="420" height="411" fill="url(#sky1)"/>
<rect x="-10" y="80" width="420" height="150" fill="#2c4126"/>
<g fill="#36522b"><path d="M32 30L75 190H-10Z"/><path d="M93 5L145 190H42Z"/><path d="M176 0L230 170H122Z"/><path d="M228 -5L285 170H172Z"/><path d="M285 0L342 170H230Z"/><path d="M345 0L398 170H292Z"/><path d="M388 30L425 170H350Z"/></g>
<g fill="#57813e"><path d="M28 105L64 230H-4Z"/><path d="M85 85L128 230H42Z"/></g>
<path d="M106 166L170 115 399 128V168H106Z" fill="#6b655c"/>
<rect x="115" y="160" width="295" height="65" fill="#6e5a44"/>
<rect x="122" y="155" width="54" height="70" fill="#8c7a64"/>
<rect x="135" y="178" width="22" height="30" fill="#a8acab"/><rect x="190" y="176" width="24" height="28" fill="#a0a4a3"/>
<rect x="240" y="172" width="122" height="52" fill="#4e4232"/>
<g fill="#b5652a"><rect x="282" y="172" width="6" height="52"/><rect x="228" y="172" width="6" height="52"/><rect x="338" y="172" width="6" height="52"/></g>
<rect x="-10" y="217" width="135" height="9" fill="#3f5a78"/>
<rect x="-10" y="225" width="420" height="30" fill="#7e7766"/>
<rect x="-10" y="250" width="420" height="75" fill="#282a1f"/>
<rect x="-10" y="255" width="120" height="60" fill="#30491f"/>
<g fill="#8f6236"><rect x="160" y="256" width="40" height="56"/><rect x="225" y="256" width="38" height="62"/><rect x="280" y="258" width="60" height="50"/></g>
<rect x="130" y="266" width="280" height="4" fill="#5a7a98"/>
<rect x="-10" y="320" width="420" height="81" fill="#4c7a35"/>
<rect x="-10" y="355" width="420" height="46" fill="#5f7e3d"/>
</g></g></g>

<!-- photo 2: loft -->
<g transform="translate(1486 998.5)"><g clip-path="url(#imgr)"><g filter="url(#ph)">
<rect x="-10" y="-10" width="420" height="411" fill="#d9d6cf"/>
<rect x="-10" y="-10" width="82" height="350" fill="#c3bfb7"/><rect x="70" y="-10" width="42" height="310" fill="#eef0ee"/>
<rect x="110" y="-10" width="48" height="260" fill="#e7e8e4"/><path d="M111 0V255M157 0V240M111 60H157M111 150H157" stroke="#8a3c20" stroke-width="4" fill="none"/>
<rect x="158" y="-10" width="50" height="260" fill="#bdb9b0"/>
<rect x="206" y="-10" width="204" height="66" fill="#3b2e27"/><rect x="206" y="55" width="204" height="26" fill="#e9eae8"/>
<rect x="212" y="80" width="198" height="150" fill="#2a2421"/><rect x="215" y="96" width="135" height="58" fill="#6f5a48"/><rect x="215" y="154" width="135" height="70" fill="#141210"/>
<rect x="350" y="90" width="60" height="140" fill="#e8e8e6"/><rect x="356" y="115" width="32" height="95" fill="#332a26"/><rect x="365" y="130" width="14" height="50" fill="#cdbfb9"/>
<path d="M75 172Q70 120 95 90Q125 110 126 172Z" fill="#6e7a52"/>
<g stroke="#6d5a48" stroke-width="3" fill="none"><path d="M15 130V260M75 130V280M15 130H75M15 205H75"/></g>
<rect x="28" y="150" width="40" height="18" fill="#222"/><rect x="25" y="205" width="40" height="14" fill="#555"/>
<path d="M-10 340V300L30 270 170 230 410 225V401H-10Z" fill="#3c3b39"/>
<path d="M170 250L410 232V300L240 310Z" fill="#737270"/>
<path d="M35 345L210 300 410 330V401H30Z" fill="#6e4526"/>
<path d="M158 390L298 294 343 307 273 391Z" fill="#6a2a14"/>
<circle cx="254" cy="332" r="13" fill="#dcd7cd"/><circle cx="254" cy="318" r="10" fill="#5f7a55"/>
<path d="M24 300L82 281 88 330 40 345Z" fill="#17191b"/><path d="M37 340L130 320 152 345 70 368Z" fill="#1c1e20"/>
<path d="M120 260L165 246 170 285 130 295Z" fill="#17191b"/><path d="M126 295L205 275 216 295 150 315Z" fill="#1c1e20"/>
<g stroke="#a86a3a" stroke-width="4" fill="none"><path d="M22 300L50 380M88 300L160 370M120 262L165 330M165 255L218 290"/></g>
</g></g></g>

<!-- photo 3: trees -->
<g transform="translate(1912 998.5)"><g clip-path="url(#imgr)">
<rect x="-10" y="-10" width="420" height="411" fill="#e9ecea"/>
<g filter="url(#ph2)" opacity=".82"><g fill="#66753a"><ellipse cx="50" cy="50" rx="40" ry="42"/><ellipse cx="125" cy="40" rx="30" ry="25"/><ellipse cx="265" cy="30" rx="48" ry="30"/><ellipse cx="355" cy="50" rx="30" ry="22"/><ellipse cx="120" cy="130" rx="20" ry="46"/><ellipse cx="165" cy="105" rx="18" ry="34"/><ellipse cx="290" cy="120" rx="16" ry="44"/><ellipse cx="10" cy="135" rx="24" ry="26"/><ellipse cx="345" cy="140" rx="22" ry="24"/><ellipse cx="70" cy="190" rx="30" ry="40"/><ellipse cx="225" cy="120" rx="12" ry="60"/></g>
<g fill="#8a8a34"><ellipse cx="68" cy="295" rx="56" ry="85"/><ellipse cx="12" cy="345" rx="30" ry="45"/></g>
<g fill="#566530"><ellipse cx="355" cy="345" rx="50" ry="60"/></g></g>
<g filter="url(#ph)"><g stroke="#55544a" fill="none"><path d="M240 30L400 210" stroke-width="12"/><path d="M240 30L400 310" stroke-width="8"/><path d="M130 60L0 210" stroke-width="12"/><path d="M110 90L0 270" stroke-width="7"/><path d="M165 120L20 391" stroke-width="8"/><path d="M195 130L110 391" stroke-width="5"/><path d="M280 130L400 391" stroke-width="9"/><path d="M250 150L340 391" stroke-width="7"/><path d="M300 20L400 90" stroke-width="5"/><path d="M190 110L190 240" stroke-width="4"/></g>
<path d="M252 192L20 391H332Z" fill="#29292a"/>
<path d="M238 235L100 391H265Z" fill="#57534a"/>
<path d="M240 215L282 391H332L252 192Z" fill="#2c2119"/>
<path d="M205 255H240M180 260L170 391M238 225L260 391" stroke="#151616" stroke-width="8" fill="none"/>
<path d="M252 192L20 391H55L252 207Z" fill="#3d3e3d"/>
<rect x="120" y="382" width="170" height="9" fill="#b0693a"/></g>
</g></g>

<!-- photo 4: interior -->
<g transform="translate(2338 998.5)"><g clip-path="url(#imgr)"><g filter="url(#ph)">
<rect x="-10" y="-10" width="420" height="411" fill="#6a4a30"/>
<rect x="-10" y="15" width="265" height="40" fill="#c8cfc8"/><rect x="-10" y="-10" width="225" height="27" fill="#c08040"/><rect x="-10" y="55" width="170" height="8" fill="#b9782f"/>
<g fill="#55703a"><ellipse cx="65" cy="38" rx="18" ry="14"/><ellipse cx="100" cy="55" rx="12" ry="40"/><ellipse cx="30" cy="75" rx="12" ry="35"/></g>
<path d="M175 -10H255V100L190 30Z" fill="#e6e3dc"/>
<rect x="34" y="100" width="80" height="150" fill="#b9782f"/><rect x="39" y="105" width="70" height="141" fill="#eae8de"/><rect x="50" y="115" width="48" height="50" fill="#c9dcc0"/>
<rect x="144" y="108" width="84" height="125" fill="#b9782f"/><rect x="150" y="114" width="72" height="112" fill="#c4d4ac"/>
<ellipse cx="124" cy="165" rx="29" ry="42" fill="#5a6e3c"/>
<rect x="255" y="-10" width="155" height="355" fill="#c6b0a4"/>
<g stroke="#b59c8e" stroke-width="2"><path d="M255 120H400M255 150H400M255 180H400M255 210H400M255 240H400M255 270H400M255 300H400"/></g>
<path d="M285 -10H410V190H400Z" fill="#dcd9d2"/><path d="M285 0L400 190" stroke="#b9782f" stroke-width="8"/>
<g stroke="#222" stroke-width="4"><path d="M292 173V208M306 173V208M320 173V208M334 173V208"/></g>
<rect x="219" y="205" width="36" height="122" fill="#383432"/>
<path d="M70 250H230L290 401H45Z" fill="#d9d5cd"/><path d="M230 250H255V330L290 401H200Z" fill="#cfcbc3"/>
<ellipse cx="149" cy="235" rx="14" ry="15" fill="#8a4a1e"/><rect x="148" y="190" width="3" height="35" fill="#6a3c1a"/>
<rect x="122" y="230" width="20" height="25" fill="#8a8a86"/>
<path d="M-10 190H40Q70 240 68 401H-10Z" fill="#a8703a"/><path d="M40 240H72L70 401H40Z" fill="#c38a4f"/>
<rect x="195" y="220" width="25" height="30" fill="#9a7e5c"/>
<path d="M240 220L250 300H230Z" fill="#6b4a24"/><path d="M205 320L235 360H195Z" fill="#b78b3a"/>
<path d="M273 265L410 262V401H280Z" fill="#8e6b3e"/><path d="M330 401V280Q345 265 360 280V401" fill="none" stroke="#b0884a" stroke-width="14"/>
</g></g></g>

<!-- photo 5: airstream -->
<g transform="translate(1060 1555)"><g clip-path="url(#imgr)"><g filter="url(#ph)">
<rect x="-10" y="-10" width="420" height="411" fill="url(#sky5)"/>
<path d="M280 150L330 145 410 148V225H280Z" fill="#a99270"/>
<rect x="-10" y="255" width="420" height="146" fill="url(#gr5)"/>
<rect x="291" y="213" width="45" height="42" fill="#7a5a3c"/><ellipse cx="368" cy="220" rx="34" ry="32" fill="#7b7b3c"/><ellipse cx="385" cy="270" rx="20" ry="16" fill="#5d6130"/>
<path d="M-10 89L131 82 190 100 287 146 292 248 150 275 -10 290Z" fill="url(#tr5)"/>
<path d="M-10 95Q100 80 132 90L170 220 160 285H-10Z" fill="#9d9d9e" opacity=".5"/>
<path d="M60 100L120 100 150 240 70 245Z" fill="#e2e2de" opacity=".55"/>
<path d="M195 130L220 135 225 190 197 190ZM225 135L250 140 252 192 230 190ZM172 125L188 128 192 185 175 185Z" fill="#2f2e2c"/>
<rect x="-10" y="130" width="42" height="52" rx="10" fill="#1f2526"/>
<rect x="-10" y="280" width="105" height="9" fill="#d5d0c6"/><rect x="-10" y="218" width="34" height="14" fill="#c8c3ba"/>
<ellipse cx="220" cy="277" rx="24" ry="22" fill="#4a4138"/><rect x="195" y="278" width="40" height="22" fill="#2f2a25"/>
<path d="M165 320L290 300 295 310 180 335Z" fill="#53402e"/>
<g fill="#c7b59a"><ellipse cx="42" cy="345" rx="22" ry="4"/><ellipse cx="100" cy="335" rx="20" ry="4"/><ellipse cx="155" cy="330" rx="20" ry="4"/></g>
</g></g></g>

<!-- photo 6: fireplace -->
<g transform="translate(1486 1555)"><g clip-path="url(#imgr)"><g filter="url(#ph)">
<rect x="-10" y="-10" width="420" height="411" fill="#e8e5e2"/>
<rect x="62" y="-10" width="300" height="28" fill="#c08040"/>
<rect x="69" y="41" width="236" height="147" fill="#1c1b1c"/>
<rect x="93" y="76" width="174" height="73" fill="url(#fire)"/>
<rect x="-10" y="127" width="79" height="95" rx="20" fill="#e8e2d8"/>
<rect x="10" y="220" width="12" height="35" fill="#c08a4a"/>
<path d="M-10 260H410V330L300 300H200L-10 270Z" fill="#a85c22"/>
<path d="M-10 270L200 285 410 335V401H-10Z" fill="#f1ece4"/>
<g stroke="#5a5550" stroke-width="2" fill="none" opacity=".75"><path d="M0 300L90 391M70 290L170 391M150 300L240 391M240 310L320 391M320 340L370 391M0 350L60 290M60 391L160 295M160 391L250 305M260 391L330 325"/></g>
<path d="M37 165L290 172 311 200 300 229 60 195Z" fill="#b87535"/>
<path d="M44 205L90 200 60 262 40 255ZM235 225L262 222 300 318 282 322Z" fill="#a9632b"/>
<g><rect x="88" y="210" width="9" height="57" fill="#3f5f90"/><rect x="97" y="212" width="8" height="56" fill="#eee"/><rect x="105" y="212" width="8" height="57" fill="#d98a3a"/><rect x="113" y="214" width="8" height="55" fill="#eee"/><rect x="121" y="216" width="8" height="52" fill="#334"/><rect x="129" y="218" width="14" height="50" fill="#d8c9a8"/></g>
<rect x="142" y="242" width="105" height="63" fill="#b8b4aa"/>
<path d="M148 235L240 230 250 245 150 250Z" fill="#3f6d9a"/>
<ellipse cx="345" cy="185" rx="52" ry="70" fill="#4e5d4a"/><ellipse cx="362" cy="125" rx="22" ry="20" fill="#8c9a84"/>
<path d="M308 232H410V350H330Z" fill="#b08a55"/>
<path d="M205 168L295 180 300 205 215 195Z" fill="#ecebe4"/>
</g></g></g>

<!-- photo 7: wicker -->
<g transform="translate(1912 1555)"><g clip-path="url(#imgr)"><g filter="url(#ph)">
<rect x="-10" y="-10" width="420" height="411" fill="#dccab7"/>
<rect x="-10" y="-10" width="30" height="411" fill="#f0e6d8"/><rect x="20" y="-10" width="70" height="411" fill="#4a2d1c"/>
<g stroke="#8a5a34" stroke-width="4"><path d="M34 50L85 75M34 85L85 110M34 120L85 145M34 155L85 180M34 30L85 45"/></g>
<rect x="20" y="-10" width="12" height="411" fill="#9c5a2a"/>
<rect x="237" y="-10" width="173" height="411" fill="#ebe9e5"/>
<rect x="214" y="-10" width="24" height="230" fill="#a04e1e"/><rect x="237" y="22" width="140" height="19" fill="#a85a25"/><path d="M340 40L377 0H399L360 40Z" fill="#a85a25"/>
<rect x="262" y="73" width="59" height="76" fill="#dcd0c4"/><g fill="#6a6660"><text x="276" y="102" font-size="12">PRAY</text><text x="279" y="116" font-size="12">FOR</text><text x="277" y="130" font-size="12">SURF</text></g>
<rect x="350" y="100" width="60" height="10" fill="#8a5a34"/>
<rect x="340" y="175" width="70" height="130" fill="#d5d4d2"/><rect x="358" y="180" width="25" height="125" fill="#8a8986"/>
<rect x="276" y="210" width="51" height="83" fill="#7a756c"/>
<rect x="90" y="305" width="320" height="96" fill="#c9b7a2"/><rect x="270" y="300" width="140" height="50" fill="#d1b29a"/>
<path d="M75 160Q80 143 130 145 165 170 210 250 270 260 275 300L270 340 170 357 120 350 85 250Z" fill="#7f6248"/>
<path d="M96 180L160 162 205 255 125 265Z" fill="#e9dfce"/>
<path d="M180 262L265 258 262 285 190 290Z" fill="#efece4"/>
<path d="M36 401V320Q50 285 105 280 165 290 176 340V401Z" fill="#4e463a"/>
<path d="M205 335Q260 325 310 335V401H205Z" fill="#8f7a60"/><path d="M205 335Q260 325 310 335V350Q260 345 205 352Z" fill="#e4e0d8"/>
</g></g></g>

<!-- photo 8: dining -->
<g transform="translate(2338 1555)"><g clip-path="url(#imgr)"><g filter="url(#ph)">
<rect x="-10" y="-10" width="420" height="411" fill="#e5e4e1"/>
<rect x="40" y="-10" width="180" height="350" fill="#eeedeb"/>
<path d="M40 0V340M82 50V330M135 0V340M180 0V340" stroke="#c9c8c4" stroke-width="2" fill="none"/>
<rect x="40" y="-10" width="5" height="350" fill="#a77a4c"/>
<rect x="-10" y="-10" width="50" height="411" fill="#f2f1ef"/>
<path d="M-10 401L40 362 200 338 410 300V401Z" fill="#bb9160"/>
<rect x="318" y="-6" width="90" height="104" fill="#efeeec" stroke="#1a1a1a" stroke-width="4"/>
<path d="M330 40Q355 15 360 50T345 85" fill="none" stroke="#555" stroke-width="2"/>
<g fill="#2f7a2f"><ellipse cx="235" cy="120" rx="40" ry="28"/><ellipse cx="258" cy="150" rx="30" ry="24"/><ellipse cx="205" cy="175" rx="22" ry="28"/><ellipse cx="235" cy="185" rx="26" ry="30"/></g>
<rect x="230" y="200" width="6" height="50" fill="#555"/>
<rect x="257" y="219" width="153" height="62" fill="#3b3b3d"/>
<path d="M295 178L352 190 345 230 290 222Z" fill="#d8a63a"/><path d="M352 188L410 205V245L345 232Z" fill="#dcc6bc"/><path d="M345 232L410 240V255L342 245Z" fill="#2e3a50"/>
<path d="M158 210Q200 205 210 240 247 260 247 290L185 300Q160 270 158 210Z" fill="#a85a68"/>
<path d="M172 290L150 345M210 295L225 360" stroke="#b98d58" stroke-width="4"/>
<ellipse cx="260" cy="248" rx="83" ry="26" fill="#f4f3f0"/>
<path d="M257 330L260 270M262 274V391" stroke="#c39b68" stroke-width="5"/>
<path d="M257 320Q270 285 372 267 368 320 310 356 270 352 257 320Z" fill="#b46a7c"/>
<path d="M290 356L270 391M340 345L365 391" stroke="#b98d58" stroke-width="4"/>
</g></g></g>

<!-- superhost badges -->
<g>
<rect x="1072" y="1012" width="103" height="29" rx="14.5" fill="#fff"/><use href="#sp" transform="translate(1082 1019)"/><text x="1094" y="1033" class="sh" textLength="72" lengthAdjust="spacingAndGlyphs">Superhost</text>
<rect x="1498" y="1568" width="103" height="29" rx="14.5" fill="#fff"/><use href="#sp" transform="translate(1508 1575)"/><text x="1520" y="1589" class="sh" textLength="72" lengthAdjust="spacingAndGlyphs">Superhost</text>
<rect x="1925" y="1568" width="103" height="29" rx="14.5" fill="#fff"/><use href="#sp" transform="translate(1935 1575)"/><text x="1947" y="1589" class="sh" textLength="72" lengthAdjust="spacingAndGlyphs">Superhost</text>
</g>

<!-- card text -->
<text x="1082" y="1430" class="ct" textLength="190" lengthAdjust="spacingAndGlyphs">Brightwoods Cabin</text>
<text x="1082" y="1454" class="cs" textLength="234" lengthAdjust="spacingAndGlyphs">Bridlepath, Ontario, Canada</text>
<text x="1386" y="1440.5" class="cr" textLength="28.5" lengthAdjust="spacingAndGlyphs">4.9</text><use href="#fs" transform="translate(1430.5 1435)" fill="#fbbf12"/>
<text x="1082" y="1504" class="cp" textLength="56" lengthAdjust="spacingAndGlyphs">$658</text><text x="1143" y="1504" class="cn" textLength="47" lengthAdjust="spacingAndGlyphs">/night</text>
<use href="#bt" transform="translate(1256 1485)"/><text x="1288" y="1502" class="cb" textLength="149" lengthAdjust="spacingAndGlyphs">Best time to Book</text>

<text x="1508" y="1430" class="ct" textLength="103" lengthAdjust="spacingAndGlyphs">Urban Loft</text>
<text x="1508" y="1454" class="cs">c</text>
<text x="1812.5" y="1440.5" class="cr" textLength="27.5" lengthAdjust="spacingAndGlyphs">4.5</text><use href="#fs" transform="translate(1856.5 1435)" fill="#fbbf12"/>
<text x="1508" y="1504" class="cp" textLength="56" lengthAdjust="spacingAndGlyphs">$410</text><text x="1569" y="1504" class="cn" textLength="47" lengthAdjust="spacingAndGlyphs">/night</text>

<text x="1933" y="1430" class="ct" textLength="200" lengthAdjust="spacingAndGlyphs">Forestville Cottages</text>
<text x="1933" y="1454" class="cs" textLength="207" lengthAdjust="spacingAndGlyphs">Simcoe, Ontario Canada</text>
<text x="2239" y="1440.5" class="cr" textLength="26.5" lengthAdjust="spacingAndGlyphs">5.0</text><use href="#fs" transform="translate(2282 1435)" fill="#fbbf12"/>
<text x="1933" y="1504" class="cp" textLength="57" lengthAdjust="spacingAndGlyphs">$325</text><text x="1995" y="1504" class="cn" textLength="47" lengthAdjust="spacingAndGlyphs">/night</text>

<text x="2359" y="1430" class="ct" textLength="168" lengthAdjust="spacingAndGlyphs">Unionville Logde</text>
<text x="2359" y="1454" class="cs" textLength="223" lengthAdjust="spacingAndGlyphs">Markham, Ontario Canada</text>
<text x="2665" y="1440.5" class="cr" textLength="26.5" lengthAdjust="spacingAndGlyphs">4.6</text><use href="#fs" transform="translate(2708 1435)" fill="#fbbf12"/>
<text x="2359" y="1504" class="cp" textLength="58" lengthAdjust="spacingAndGlyphs">$485</text><text x="2421" y="1504" class="cn" textLength="47" lengthAdjust="spacingAndGlyphs">/night</text>
<use href="#bt" transform="translate(2534.5 1485)"/><text x="2566" y="1502" class="cb" textLength="149" lengthAdjust="spacingAndGlyphs">Best time to Book</text>

<text x="1081" y="1987" class="ct" textLength="208" lengthAdjust="spacingAndGlyphs">Missisuaga Aistream</text>
<text x="1508" y="1987" class="ct" textLength="152" lengthAdjust="spacingAndGlyphs">Niagara Homes</text>
<text x="1933" y="1987" class="ct" textLength="132" lengthAdjust="spacingAndGlyphs">Sunny Estate</text>
<text x="2361" y="1987" class="ct" textLength="144" lengthAdjust="spacingAndGlyphs">Lawrence Hills</text>
</g>

<!-- code -->
<path d="M1840 2085C1900 2180 1900 2260 1880 2340C1850 2400 1830 2440 1880 2498" fill="none" stroke="#1d1f21" stroke-width="30"/>
<rect x="1897" y="2082" width="2" height="416" fill="#3a3e40"/>
<text x="929" y="2156" font-size="37" class="w" textLength="418" lengthAdjust="spacingAndGlyphs">homepageFrame48.tsx</text>
<text x="1384" y="2156" font-size="37" class="g" textLength="301" lengthAdjust="spacingAndGlyphs">Component2.tsx</text>
<text x="1743" y="2156" font-size="37" class="g" textLength="48" lengthAdjust="spacingAndGlyphs">Co</text>
<g fill="#a0a6a9"><circle cx="1813" cy="2146" r="4.5"/><circle cx="1827" cy="2146" r="4.5"/><circle cx="1841" cy="2146" r="4.5"/></g>
<g clip-path="url(#c1)">
<text class="m n" x="923" y="2245">1</text><text class="m n" x="923" y="2297">2</text><text class="m n" x="923" y="2349">3</text><text class="m n" x="923" y="2401">4</text><text class="m n" x="923" y="2453">5</text><text class="m n" x="923" y="2505">6</text>
<text class="m" x="1002" y="2245"><tspan class="k">import</tspan> <tspan class="e">{ FlightSearchForm }</tspan> <tspan class="k">from</tspan> <tspan class="r">"./</tspan></text>
<text class="m" x="1002" y="2297"><tspan class="k">import</tspan> <tspan class="e">{ UpcomingFlight }</tspan> <tspan class="k">from</tspan> <tspan class="r">"./up</tspan></text>
<text class="m" x="1002" y="2349"><tspan class="k">import</tspan> <tspan class="e">{ TripPlan }</tspan> <tspan class="k">from</tspan> <tspan class="r">"./trip-pla</tspan></text>
<text class="m" x="1002" y="2401"><tspan class="k">import</tspan> <tspan class="e">{ Destinations }</tspan> <tspan class="k">from</tspan> <tspan class="r">"./dest</tspan></text>
<text class="m" x="1002" y="2453"><tspan class="k">import</tspan> <tspan class="e">{ PopularAirlines }</tspan> <tspan class="k">from</tspan> <tspan class="r">"./p</tspan></text>
<text class="m" x="1002" y="2505"><tspan class="k">import</tspan> <tspan class="e">{ TravelPartners }</tspan> <tspan class="k">from</tspan> <tspan class="r">"./tr</tspan></text>
</g>
<text x="1943" y="2157" font-size="37" class="w" textLength="425" lengthAdjust="spacingAndGlyphs">homepageFrame48.css</text>
<rect x="1934" y="2180" width="442" height="3" fill="#477cff"/>
<text x="2406" y="2157" font-size="37" class="g" textLength="308" lengthAdjust="spacingAndGlyphs">Component2.css</text>
<text x="2773" y="2157" font-size="37" class="g" textLength="26" lengthAdjust="spacingAndGlyphs">C</text>
<g fill="#a0a6a9"><circle cx="2826" cy="2147" r="4.5"/><circle cx="2840" cy="2147" r="4.5"/><circle cx="2854" cy="2147" r="4.5"/></g>
<g clip-path="url(#c2)">
<text class="m n" x="1936" y="2249">1</text><text class="m n" x="1936" y="2301">2</text><text class="m n" x="1936" y="2353">3</text><text class="m n" x="1936" y="2405">4</text><text class="m n" x="1936" y="2457">5</text><text class="m n" x="1936" y="2509">6</text>
<text class="m k" x="2019" y="2249">.mainstyle {</text>
<text class="m" x="2067" y="2301"><tspan class="e">background-color</tspan><tspan class="k">:</tspan> <tspan class="r">#cdc0b0</tspan><tspan class="k">;</tspan></text>
<text class="m" x="2067" y="2353"><tspan class="e">color</tspan><tspan class="k">:</tspan> <tspan class="r">Red</tspan><tspan class="k">;</tspan></text>
<text class="m" x="2067" y="2405"><tspan class="e">padding</tspan><tspan class="k">:</tspan> <tspan class="r">10px</tspan><tspan class="k">;</tspan></text>
<text class="m" x="2067" y="2457"><tspan class="e">font-family</tspan><tspan class="k">:</tspan> <tspan class="r">Arial</tspan><tspan class="k">;</tspan></text>
<text class="m" x="2067" y="2509"><tspan class="e">text-align</tspan><tspan class="k">:</tspan> <tspan class="r">center</tspan><tspan class="k">;</tspan></text>
</g>
<rect x="2650" y="2359" width="104" height="104" rx="28" fill="#3a3e41"/><rect x="2782" y="2359" width="104" height="104" rx="28" fill="#3a3e41"/>
<path d="M2680 2400V2388H2692M2713 2388H2725V2400M2680 2423V2435H2692M2713 2435H2725V2423" fill="none" stroke="#a7adaf" stroke-width="5"/>
<path d="M2812 2396L2798 2412 2812 2428M2856 2396L2870 2412 2856 2428M2841 2388L2827 2437" fill="none" stroke="#8f9598" stroke-width="5" stroke-linecap="round" stroke-linejoin="round"/>

<!-- right panel -->
<text x="2949" y="506" font-size="46" class="w sb" textLength="189" lengthAdjust="spacingAndGlyphs">Tagging</text>
<circle cx="3178" cy="491" r="16" fill="none" stroke="#8f9598" stroke-width="3"/><rect x="3176.5" y="488" width="3" height="12" fill="#8f9598"/><circle cx="3178" cy="483" r="2" fill="#8f9598"/>
<text x="2949" y="603" font-size="41" class="g" textLength="193" lengthAdjust="spacingAndGlyphs">Group by:</text>
<g class="bl" style="stroke-width:3.8"><path d="M3184 574H3198L3214 596Q3216 600 3212 602L3204 606Q3200 607 3198 603L3183 583Z"/><circle cx="3192" cy="583" r="2.5"/><path d="M3194 569L3204 569 3218 590"/></g>
<text x="3240" y="601" font-size="41" fill="#4a80f5" class="sb" textLength="98" lengthAdjust="spacingAndGlyphs">Tags</text>
<g class="li" style="stroke-width:3.8"><path d="M3385 572L3404 586 3385 598 3366 586ZM3366 594L3385 606 3404 594"/></g>
<text x="3426" y="601" font-size="41" class="g" textLength="136" lengthAdjust="spacingAndGlyphs">Layers</text>

<text x="2949" y="691" font-size="38" class="w" textLength="143" lengthAdjust="spacingAndGlyphs">Buttons</text>
<text x="3578" y="691" font-size="38" fill="#4a80f5" textLength="220" lengthAdjust="spacingAndGlyphs">Highlight all</text>

<g fill="#383e42" stroke="#43484b" stroke-width="3">
<rect x="2949.5" y="729.5" width="849" height="156" rx="24"/>
<rect x="2949.5" y="903.5" width="849" height="156" rx="24"/>
<rect x="2949.5" y="1076.5" width="849" height="156" rx="24"/>
<rect x="2949.5" y="1250.5" width="849" height="156" rx="24"/>
<rect x="2949.5" y="1423.5" width="849" height="156" rx="24"/>
<rect x="2949.5" y="1729.5" width="849" height="156" rx="24"/>
<rect x="2949.5" y="2036.5" width="849" height="157" rx="24"/>
<rect x="2949.5" y="2223.5" width="849" height="157" rx="24"/>
</g>
<rect x="2948" y="1611" width="852" height="2" fill="#404548"/><rect x="2948" y="1920" width="852" height="2" fill="#404548"/>

<use href="#bars" transform="translate(2992 807)"/><use href="#bars" transform="translate(2992 981)"/><use href="#bars" transform="translate(2992 1154)"/><use href="#bars" transform="translate(2992 1328)"/><use href="#bars" transform="translate(2992 1501)"/><use href="#bars" transform="translate(2992 1807)"/><use href="#bars" transform="translate(2992 2115)"/><use href="#bars" transform="translate(2992 2302)"/>
<use href="#pen" transform="translate(3720 785)"/><use href="#pen" transform="translate(3720 959)"/><use href="#pen" transform="translate(3720 1132)"/><use href="#pen" transform="translate(3720 1306)"/><use href="#pen" transform="translate(3720 1479)"/><use href="#pen" transform="translate(3720 1786)"/><use href="#pen" transform="translate(3720 2093)"/><use href="#pen" transform="translate(3720 2280)"/>

<text x="3059" y="822" font-size="39" class="w" textLength="332" lengthAdjust="spacingAndGlyphs">Main CTA Button</text>
<text x="3058" y="996" font-size="39" class="w" textLength="289" lengthAdjust="spacingAndGlyphs">Search Button</text>
<text x="3058" y="1169" font-size="39" class="w" textLength="235" lengthAdjust="spacingAndGlyphs">Map Button</text>
<text x="3058" y="1343" font-size="39" class="w" textLength="223" lengthAdjust="spacingAndGlyphs">Tile Button</text>
<text x="3058" y="1516" font-size="39" class="w" textLength="350" lengthAdjust="spacingAndGlyphs">Subscribe Button</text>

<text x="2949" y="1692" font-size="38" class="w" textLength="117" lengthAdjust="spacingAndGlyphs">Inputs</text>
<text x="3578" y="1692" font-size="38" fill="#4a80f5" textLength="219" lengthAdjust="spacingAndGlyphs">Highlight all</text>
<text x="3059" y="1824" font-size="39" class="w" textLength="113" lengthAdjust="spacingAndGlyphs">Email</text>

<text x="2949" y="2000" font-size="38" class="w" textLength="351" lengthAdjust="spacingAndGlyphs">Date &amp; Time Picker</text>
<text x="3578" y="2000" font-size="38" fill="#4a80f5" textLength="219" lengthAdjust="spacingAndGlyphs">Highlight all</text>
<text x="3059" y="2103" font-size="39" class="w" textLength="179" lengthAdjust="spacingAndGlyphs">Check-in</text>
<text x="3059" y="2151" font-size="33" fill="#6f7b86" textLength="531" lengthAdjust="spacingAndGlyphs">Material UI variant not selected</text>
<use href="#cur" transform="translate(3612 2124)"/>
<text x="3059" y="2290" font-size="39" class="w" textLength="211" lengthAdjust="spacingAndGlyphs">Check-out</text>
<text x="3059" y="2338" font-size="33" fill="#6f7b86" textLength="531" lengthAdjust="spacingAndGlyphs">Material UI variant not selected</text>
<use href="#cur" transform="translate(3612 2311)"/>
</svg>
</body></html>
